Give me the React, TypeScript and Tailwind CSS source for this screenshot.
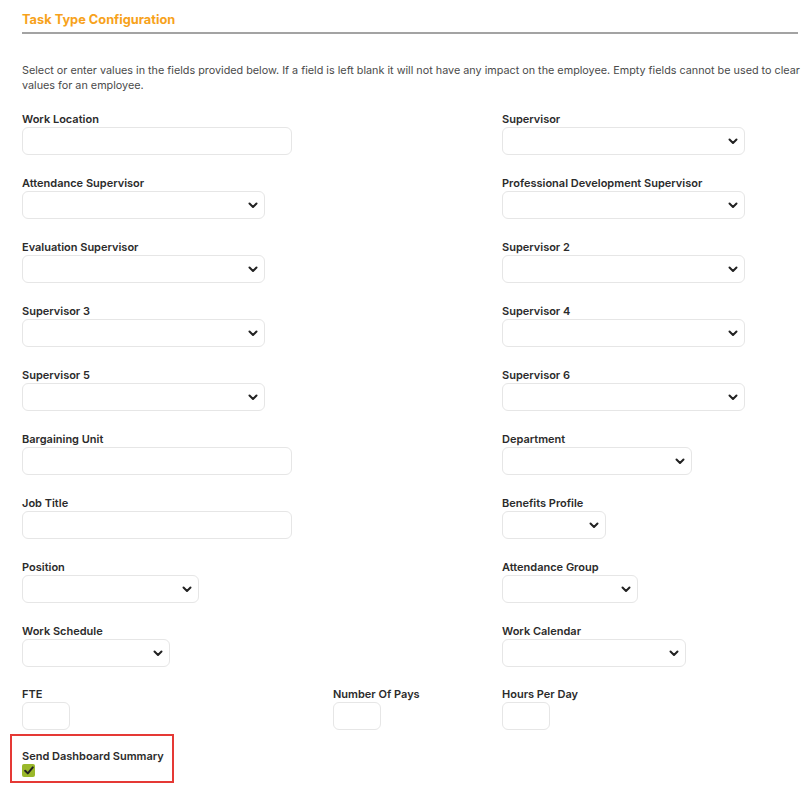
import React from 'react';

type Field = {
  label: string;
  kind: 'input' | 'select';
  width: string;
};

const rows: [Field, Field][] = [
  [
    { label: 'Work Location', kind: 'input', width: 'w-[270px]' },
    { label: 'Supervisor', kind: 'select', width: 'w-[243px]' },
  ],
  [
    { label: 'Attendance Supervisor', kind: 'select', width: 'w-[243px]' },
    { label: 'Professional Development Supervisor', kind: 'select', width: 'w-[243px]' },
  ],
  [
    { label: 'Evaluation Supervisor', kind: 'select', width: 'w-[243px]' },
    { label: 'Supervisor 2', kind: 'select', width: 'w-[243px]' },
  ],
  [
    { label: 'Supervisor 3', kind: 'select', width: 'w-[243px]' },
    { label: 'Supervisor 4', kind: 'select', width: 'w-[243px]' },
  ],
  [
    { label: 'Supervisor 5', kind: 'select', width: 'w-[243px]' },
    { label: 'Supervisor 6', kind: 'select', width: 'w-[243px]' },
  ],
  [
    { label: 'Bargaining Unit', kind: 'input', width: 'w-[270px]' },
    { label: 'Department', kind: 'select', width: 'w-[190px]' },
  ],
  [
    { label: 'Job Title', kind: 'input', width: 'w-[270px]' },
    { label: 'Benefits Profile', kind: 'select', width: 'w-[104px]' },
  ],
  [
    { label: 'Position', kind: 'select', width: 'w-[177px]' },
    { label: 'Attendance Group', kind: 'select', width: 'w-[136px]' },
  ],
  [
    { label: 'Work Schedule', kind: 'select', width: 'w-[148px]' },
    { label: 'Work Calendar', kind: 'select', width: 'w-[184px]' },
  ],
];

function Chevron() {
  return (
    <svg width="10" height="7" viewBox="0 0 10 7" className="pointer-events-none absolute right-[7px] top-[11px]">
      <path d="M1.5 1.5 L5 5 L8.5 1.5" fill="none" stroke="#222" strokeWidth="2" strokeLinecap="round" strokeLinejoin="round" />
    </svg>
  );
}

function FormField({ field }: { field: Field }) {
  return (
    <div className="flex flex-col">
      <label className="h-[14px] text-[11px] leading-[14px] font-semibold text-[#2b2b2b]">{field.label}</label>
      {field.kind === 'input' ? (
        <input type="text" className={`${field.width} mt-[1px] h-[28px] rounded-[6px] border border-[#e6e6e6] bg-white outline-none`} />
      ) : (
        <div className={`${field.width} relative mt-[1px] h-[28px]`}>
          <select className="h-full w-full appearance-none rounded-[6px] border border-[#e6e6e6] bg-white outline-none">
            <option></option>
          </select>
          <Chevron />
        </div>
      )}
    </div>
  );
}

function SmallInput({ label }: { label: string }) {
  return (
    <div className="flex flex-col">
      <label className="h-[14px] text-[11px] leading-[14px] font-semibold text-[#2b2b2b]">{label}</label>
      <input type="text" className="mt-[1px] w-[48px] h-[28px] rounded-[6px] border border-[#e6e6e6] bg-white outline-none" />
    </div>
  );
}

export default function App() {
  return (
    <div className="min-h-screen bg-white pl-[22px] pr-[13px] pt-[11px]" style={{ fontFamily: 'Inter, "Noto Sans", sans-serif' }}>
      <h2 className="text-[12.8px] leading-[17px] font-bold text-[#f7a21b]">Task Type Configuration</h2>
      <div className="mt-[4px] h-[2px] bg-[#a3a3a3]"></div>

      <p className="mt-[29px] mr-[-8px] text-[10.8px] leading-[15px] text-[#4a4a4a]">
        Select or enter values in the fields provided below. If a field is left blank it will not have any impact on the employee. Empty fields cannot be used to clear values for an employee.
      </p>

      <div className="mt-[19px] grid grid-cols-[480px_1fr] gap-y-[21px]">
        {rows.map(([left, right]) => (
          <React.Fragment key={left.label}>
            <FormField field={left} />
            <FormField field={right} />
          </React.Fragment>
        ))}
      </div>

      <div className="mt-[20px] flex">
        <div className="w-[311px]">
          <SmallInput label="FTE" />
        </div>
        <div className="w-[169px]">
          <SmallInput label="Number Of Pays" />
        </div>
        <SmallInput label="Hours Per Day" />
      </div>

      <div className="ml-[-12px] mt-[4px] w-fit border-2 border-[#e53935] pl-[10px] pr-[8px] pt-[13px] pb-[4px]">
        <label className="block h-[14px] whitespace-nowrap text-[11px] leading-[14px] font-semibold text-[#2b2b2b]">Send Dashboard Summary</label>
        <div className="mt-[1px] flex h-[13px] w-[13px] items-center justify-center rounded-[2px] bg-[#9ab82a]">
          <svg width="10" height="9" viewBox="0 0 10 9">
            <path d="M1.2 4.8 L3.8 7.4 L8.8 1.4" fill="none" stroke="#222" strokeWidth="2" strokeLinecap="round" strokeLinejoin="round" />
          </svg>
        </div>
      </div>
    </div>
  );
}
